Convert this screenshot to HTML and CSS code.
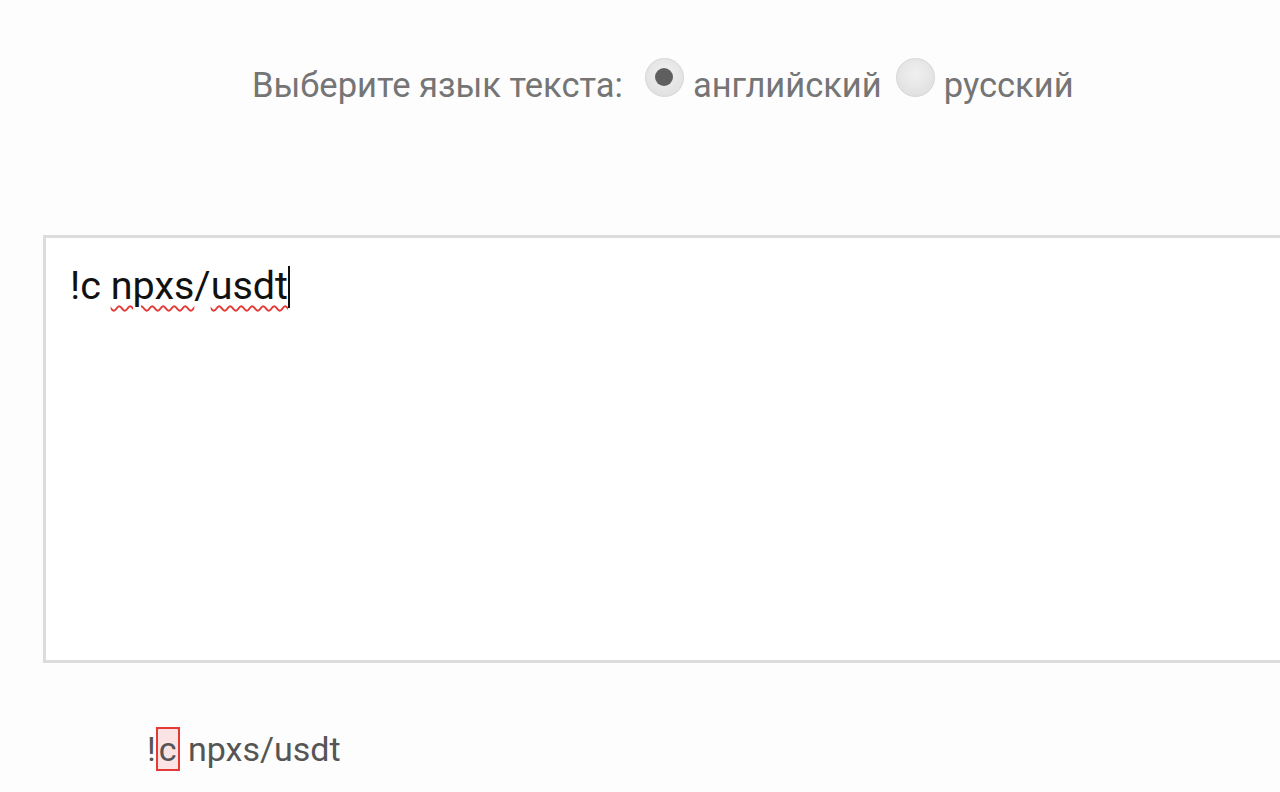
FILE: index.html
```html
<!DOCTYPE html>
<html lang="ru">
<head>
    <meta charset="UTF-8">
    <meta name="viewport" content="width=device-width, initial-scale=1.0">
    <title>Проверка текста</title>
    <link rel="stylesheet" href="styles.css">
</head>
<body>
    <div class="lang-row">
        <span class="lang-label">Выберите язык текста:</span>
        <label class="lang-option">
            <span class="radio checked"></span>
            <span>английский</span>
        </label>
        <label class="lang-option">
            <span class="radio"></span>
            <span>русский</span>
        </label>
    </div>

    <div class="editor">
        <div class="editor-text">!c <span class="misspelled">npxs</span>/<span class="misspelled">usdt</span><span class="caret"></span></div>
        <span class="resize-grip"></span>
    </div>

    <div class="result">!<span class="mark">c</span> npxs/usdt</div>
</body>
</html>
```

FILE: styles.css
```css
body {
    margin: 0;
    background-color: #fdfdfd;
    font-family: Roboto, "Noto Sans", sans-serif;
    color: #757575;
    overflow: hidden;
}

.lang-row {
    display: flex;
    align-items: center;
    padding: 65px 0 0 252px;
    height: 40px;
    font-size: 34.5px;
}

.lang-label {
    margin-right: 22px;
}

.lang-option {
    display: flex;
    align-items: center;
    margin-right: 14px;
}

.radio {
    width: 39px;
    height: 39px;
    border-radius: 50%;
    box-sizing: border-box;
    border: 1px solid #d6d6d6;
    background: radial-gradient(circle at 50% 40%, #f0f0f0, #dcdcdc);
    margin-right: 9px;
    margin-top: -16px;
    display: flex;
    align-items: center;
    justify-content: center;
}

.radio.checked::after {
    content: "";
    width: 18px;
    height: 18px;
    border-radius: 50%;
    background: #5f5f5f;
}

.editor {
    position: relative;
    margin: 130px 0 0 43px;
    width: 1260px;
    height: 422px;
    border: 3px solid #dcdcdc;
    background: #fff;
}

.editor-text {
    padding: 24px 0 0 24px;
    font-size: 39.5px;
    color: #111;
}

.misspelled {
    text-decoration: underline wavy #e53935;
    text-decoration-thickness: 2px;
    text-underline-offset: 6px;
}

.caret {
    display: inline-block;
    width: 2px;
    height: 42px;
    background: #111;
    vertical-align: -9px;
}

.resize-grip {
    position: absolute;
    right: 2px;
    bottom: 2px;
    width: 6px;
    height: 6px;
    background: linear-gradient(135deg, transparent 45%, #aaa 50%, transparent 60%);
}

.result {
    margin: 64px 0 0 147px;
    font-size: 34px;
    color: #555;
}

.mark {
    display: inline-block;
    border: 2px solid #e53935;
    background: #fbe3e3;
    padding: 0 1px;
    line-height: 40px;
}
```
